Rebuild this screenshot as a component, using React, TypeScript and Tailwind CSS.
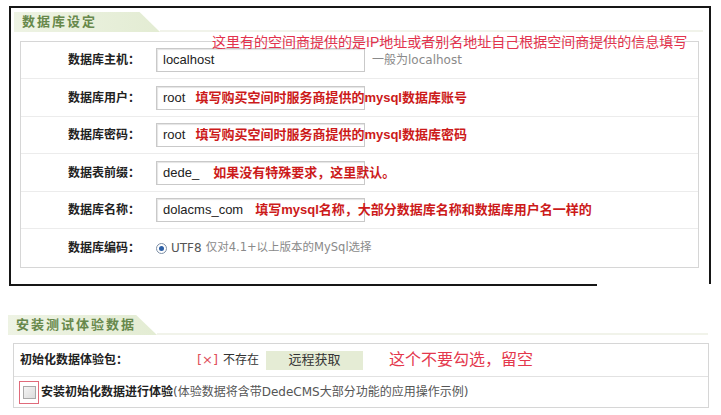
import React from "react";

const CJK = "font-['Liberation_Sans','Noto_Sans_CJK_SC',sans-serif]";
const VER = "font-['DejaVu_Sans','Noto_Sans_CJK_SC',sans-serif]";

function Tab({ text, w }: { text: string; w: string }) {
  return (
    <div className="flex h-[20px] items-stretch">
      <div
        className={`${w} h-full bg-gradient-to-r from-[#eef3e4] to-[#e3ecd3] [clip-path:polygon(0_0,86%_0,100%_100%,0_100%)] flex items-center pl-[8px]`}
      >
        <span className={`${CJK} text-[13px] font-bold tracking-[2px] text-[#67884b]`}>{text}</span>
      </div>
      <div className="flex-1 border-b-2 border-[#f1f3ea]" />
    </div>
  );
}

type Row = { label: string; value?: string; note?: string; noteMl?: string; h: string };

const rows: Row[] = [
  { label: "数据库主机：", value: "localhost", h: "h-[37px]" },
  { label: "数据库用户：", value: "root", note: "填写购买空间时服务商提供的mysql数据库账号", noteMl: "ml-[10px]", h: "h-[38px]" },
  { label: "数据库密码：", value: "root", note: "填写购买空间时服务商提供的mysql数据库密码", noteMl: "ml-[10px]", h: "h-[37px]" },
  { label: "数据表前缀：", value: "dede_", note: "如果没有特殊要求，这里默认。", noteMl: "ml-[14px]", h: "h-[38px]" },
  { label: "数据库名称：", value: "dolacms_com", note: "填写mysql名称，大部分数据库名称和数据库用户名一样的", noteMl: "ml-[12px]", h: "h-[37px]" },
];

export default function App() {
  return (
    <div className="w-[721px] h-[415px] bg-white overflow-hidden">
      {/* top section */}
      <div className="ml-[9px] pt-[6px] flex flex-col">
        <div className="relative w-[702px] h-[278px] border-x-2 border-t-2 border-[#161616] flex flex-col">
          <div className="mt-[4px] ml-[3px] mr-[6px]">
            <Tab text="数据库设定" w="w-[146px]" />
          </div>
          <div className="ml-[9px] mt-[9px] w-[679px] border border-[#d6d6d6] flex flex-col">
            {rows.map((r) => (
              <div key={r.label} className={`${r.h} border-b border-[#ececec] flex items-center`}>
                <div className={`w-[119px] text-right ${CJK} text-[12px] font-bold text-[#222]`}>{r.label}</div>
                <div className="ml-[16px] w-[209px] h-[24px] border border-[#c9c9c9] shadow-[inset_1px_1px_1px_#e4e4e4] flex items-center pl-[6px] whitespace-nowrap">
                  <span className={`${CJK} text-[13px] text-[#222]`}>{r.value}</span>
                  {r.note && (
                    <span className={`${r.noteMl} ${CJK} text-[13px] font-bold text-[#cc1a1a]`}>{r.note}</span>
                  )}
                </div>
                {r.label === "数据库主机：" && (
                  <span className={`ml-[7px] ${VER} text-[12px] text-[#8a8a8a]`}>一般为localhost</span>
                )}
              </div>
            ))}
            <div className="h-[38px] flex items-center">
              <div className={`w-[119px] text-right ${CJK} text-[12px] font-bold text-[#222]`}>数据库编码：</div>
              <div className="ml-[16px] flex items-center">
                <span className="w-[11px] h-[11px] rounded-full border border-[#7d8fa6] bg-white flex items-center justify-center">
                  <span className="w-[5px] h-[5px] rounded-full bg-[#2c5fa6]" />
                </span>
                <span className={`ml-[4px] ${VER} text-[12px] text-[#555]`}>UTF8</span>
                <span className={`ml-[4px] ${VER} text-[11.5px] text-[#8a8a8a]`}>仅对4.1+以上版本的MySql选择</span>
              </div>
            </div>
          </div>
          <div className={`absolute left-[201px] top-[25px] ${CJK} text-[14px] leading-[18px] text-[#e2334d] whitespace-nowrap`}>
            这里有的空间商提供的是IP地址或者别名地址自己根据空间商提供的信息填写
          </div>
        </div>
        <div className="w-[588px] h-[2px] bg-[#161616]" />
      </div>

      {/* bottom section */}
      <div className="ml-[8px] mt-[29px] w-[700px]">
        <Tab text="安装测试体验数据" w="w-[149px]" />
        <div className="ml-[5px] mt-[8px] w-[696px] border border-[#d6d6d6] flex flex-col">
          <div className="h-[33px] border-b border-[#e2e2e2] flex items-center pl-[6px]">
            <div className={`w-[177px] ${CJK} text-[12px] font-bold text-[#222]`}>初始化数据体验包：</div>
            <span className={`${VER} text-[13px] text-[#e0505a]`}>[×]</span>
            <span className={`ml-[5px] ${CJK} text-[12px] text-[#333]`}>不存在</span>
            <div className={`ml-[7px] w-[97px] h-[19px] bg-[#e5ecd5] flex items-center justify-center ${CJK} text-[13px] text-[#333]`}>
              远程获取
            </div>
            <span className={`ml-[26px] ${CJK} text-[16px] text-[#e4384d]`}>这个不要勾选，留空</span>
          </div>
          <div className="h-[30px] flex items-center pl-[5px]">
            <div className="w-[20px] h-[23px] border border-[#e06a7a] flex items-center justify-center">
              <span className="w-[13px] h-[13px] border border-[#a9a9a9] bg-gradient-to-br from-[#f4f4f4] to-[#dcdcdc]" />
            </div>
            <span className={`ml-[2px] ${CJK} text-[12px] font-bold text-[#222]`}>安装初始化数据进行体验</span>
            <span className={`${VER} text-[12px] text-[#555]`}>(体验数据将含带DedeCMS大部分功能的应用操作示例)</span>
          </div>
        </div>
      </div>
    </div>
  );
}
